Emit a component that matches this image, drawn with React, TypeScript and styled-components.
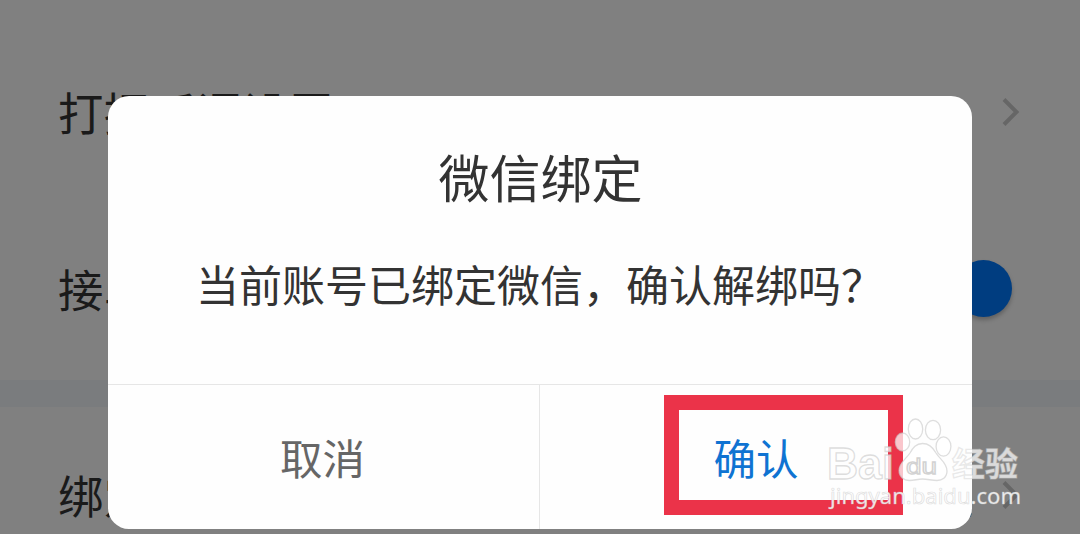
import styled, { createGlobalStyle } from 'styled-components'

// interface
interface SettingItem {
  label: string
  value?: string
  type: 'link' | 'switch'
}

// data
const mainItems: SettingItem[] = [
  { label: '打招呼语设置', type: 'link' },
  { label: '接单', type: 'switch' },
]
const bindItems: SettingItem[] = [
  { label: '绑定微信', value: '已绑定', type: 'link' },
]

// styled
const GlobalStyle = createGlobalStyle`
  * {
    box-sizing: border-box;
  }
  body {
    margin: 0;
    overflow: hidden;
    font-family: 'Noto Sans CJK SC', sans-serif;
  }
`
const Screen = styled.div`
  position: relative;
  width: 1080px;
  height: 534px;
  overflow: hidden;
  background: #808080;
`
const Page = styled.div`
  display: flex;
  flex-direction: column;
  padding-top: 23px;
`
const Band = styled.div`
  height: 27px;
  margin-top: 3px;
  background: #7a7c7e;
`
const Row = styled.div<{ $height?: number }>`
  display: flex;
  align-items: center;
  height: ${(props) => props.$height || 177}px;
  padding: 0 60px 0 58px;
  color: #1a1a1a;
  font-size: 45.4px;
  letter-spacing: 0.7px;
  line-height: 1;
  white-space: nowrap;
`
const Label = styled.span`
  flex: 1;
`
const Value = styled.span`
  margin-right: 26px;
`
const Track = styled.div`
  display: flex;
  align-items: center;
  justify-content: flex-end;
  width: 96px;
  height: 40px;
  margin-right: 8px;
  border-radius: 20px;
`
const Knob = styled.div`
  width: 57px;
  height: 57px;
  flex: none;
  border-radius: 50%;
  background: #003d80;
  box-shadow: 0 3px 4px rgba(0, 0, 0, 0.25);
`
const Overlay = styled.div`
  position: absolute;
  inset: 0;
  display: flex;
  justify-content: center;
  align-items: flex-start;
  padding-top: 96px;
`
const Modal = styled.div`
  display: flex;
  flex-direction: column;
  width: 864px;
  height: 433px;
  border-radius: 21px;
  background: #fefefe;
  color: #333;
  text-align: center;
  overflow: hidden;
`
const Title = styled.h2`
  margin: 0;
  padding: 54px 0 0 1px;
  font-size: 51px;
  font-weight: 400;
  line-height: 52px;
`
const Message = styled.p`
  flex: 1;
  margin: 0;
  padding: 59px 0 0;
  font-size: 43px;
  line-height: 44px;
  white-space: nowrap;
`
const ButtonContainer = styled.div`
  display: grid;
  grid-template-columns: 1fr 1fr;
  height: 145px;
  border-top: 1px solid #e6e6e6;
`
const ModalButton = styled.button`
  padding: 0 2px 0 0;
  border: 0;
  background: none;
  color: ${(props) => props.color};
  font-family: inherit;
  font-size: 42.5px;
  line-height: 1;
  &:first-child {
    border-right: 1px solid #e6e6e6;
  }
  &:last-child {
    padding: 0;
  }
`
const Highlight = styled.div`
  position: absolute;
  left: 664px;
  top: 395px;
  width: 239px;
  height: 120px;
  border: 15.5px solid #eb3349;
`
const Watermark = styled.svg`
  position: absolute;
  left: 820px;
  top: 410px;
`

// component
const Chevron = () => (
  <svg width='20' height='32' viewBox='0 0 20 32' fill='none'>
    <path d='M4 3.5 16.5 16 4 28.5' stroke='#666' strokeWidth='4' />
  </svg>
)

const SettingRow = ({ item, height }: { item: SettingItem; height?: number }) => (
  <Row $height={height}>
    <Label>{item.label}</Label>
    {item.value && <Value>{item.value}</Value>}
    {item.type === 'link' ? (
      <Chevron />
    ) : (
      <Track>
        <Knob />
      </Track>
    )}
  </Row>
)

const BaiduWatermark = () => (
  <Watermark width='210' height='110' viewBox='820 410 210 110'>
    <g
      fill='#fff'
      fillOpacity='0.72'
      stroke='#c8c8c8'
      strokeOpacity='0.6'
      strokeWidth='1.3'
    >
      <text
        x='827'
        y='478.5'
        fontFamily='Liberation Sans, sans-serif'
        fontWeight='700'
        fontSize='45'
        textLength='67'
        lengthAdjust='spacingAndGlyphs'
      >
        Bai
      </text>
      <ellipse cx='902.5' cy='442' rx='7.2' ry='9' />
      <ellipse cx='915.5' cy='429' rx='7.2' ry='10' />
      <ellipse cx='933' cy='430' rx='7.6' ry='9.6' />
      <ellipse cx='943.5' cy='446.5' rx='7.4' ry='9.6' />
      <path d='M922.5 443.5c7 0 10.5 4 13.5 9.5 3.5 6 11 9.5 11 18 0 6.5-5 9.5-10 9.5-5 0-9.5-1.5-14.5-1.5s-8 1.5-13 1.5c-6 0-10.5-4-10.5-10 0-7.5 7.5-12 11-17.5 3-5.5 6-9.5 12.5-9.5Z' />
      <text
        x='906'
        y='473.5'
        fontFamily='Liberation Sans, sans-serif'
        fontSize='22'
        stroke='#b4b4b4'
        textLength='31'
        lengthAdjust='spacingAndGlyphs'
      >
        du
      </text>
      <text
        x='952'
        y='476'
        fontFamily='Noto Sans CJK SC, sans-serif'
        fontWeight='700'
        fontSize='33'
        strokeOpacity='0.4'
      >
        经验
      </text>
      <text
        x='830'
        y='504'
        fontFamily='Noto Sans, sans-serif'
        fontSize='22'
        fillOpacity='0.9'
        strokeWidth='0.7'
        textLength='191'
        lengthAdjust='spacingAndGlyphs'
      >
        jingyan.baidu.com
      </text>
    </g>
  </Watermark>
)

const App = () => {
  return (
    <Screen>
      <GlobalStyle />
      <Page>
        {mainItems.map((item) => (
          <SettingRow key={item.label} item={item} />
        ))}
        <Band />
        {bindItems.map((item) => (
          <SettingRow key={item.label} item={item} height={175} />
        ))}
      </Page>
      <Overlay>
        <Modal>
          <Title>微信绑定</Title>
          <Message>当前账号已绑定微信，确认解绑吗？</Message>
          <ButtonContainer>
            <ModalButton type='button' color='#666'>
              取消
            </ModalButton>
            <ModalButton type='button' color='#0f73d2'>
              确认
            </ModalButton>
          </ButtonContainer>
        </Modal>
      </Overlay>
      <Highlight />
      <BaiduWatermark />
    </Screen>
  )
}

export default App
